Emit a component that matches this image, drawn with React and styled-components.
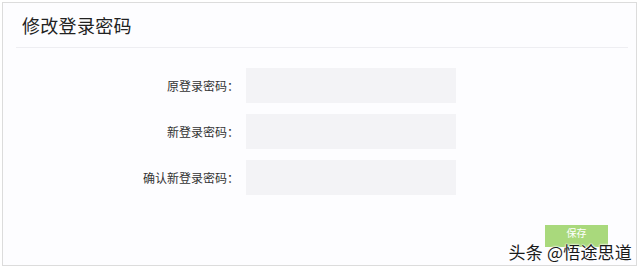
import React from "react";
import styled, { createGlobalStyle } from "styled-components";

const GlobalStyle = createGlobalStyle`
  html, body {
    margin: 0;
    padding: 0;
    background: #ffffff;
    font-family: "Noto Sans CJK SC", "Liberation Sans", sans-serif;
  }
`;

const fields = [
  { id: "old", label: "原登录密码：" },
  { id: "new", label: "新登录密码：" },
  { id: "confirm", label: "确认新登录密码：" },
];

export default function App() {
  return (
    <>
      <GlobalStyle />
      <Page>
        <Panel>
          <Header>
            <Title>修改登录密码</Title>
          </Header>
          <Form>
            {fields.map((f) => (
              <Row key={f.id}>
                <Label htmlFor={f.id}>{f.label}</Label>
                <Input id={f.id} type="password" />
              </Row>
            ))}
          </Form>
          <Footer>
            <SaveButton>保存</SaveButton>
          </Footer>
          <Watermark>头条 @悟途思道</Watermark>
        </Panel>
      </Page>
    </>
  );
}

const Page = styled.div`
  width: 640px;
  height: 269px;
  padding: 2px 3px 3px 2px;
  box-sizing: border-box;
  background: #ffffff;
`;

const Panel = styled.div`
  position: relative;
  height: 100%;
  box-sizing: border-box;
  border: 1px solid #dcdcdc;
  background: #fdfdff;
  display: flex;
  flex-direction: column;
`;

const Header = styled.div`
  margin: 0 8px 0 13px;
  height: 44px;
  border-bottom: 1px solid #eeeef2;
  display: flex;
  align-items: center;
  padding-left: 6px;
`;

const Title = styled.h1`
  margin: 0;
  font-size: 18px;
  font-weight: 400;
  color: #222;
  letter-spacing: 0.3px;
`;

const Form = styled.div`
  display: flex;
  flex-direction: column;
  gap: 11px;
  padding-top: 20px;
`;

const Row = styled.div`
  display: grid;
  grid-template-columns: 236px 210px;
  column-gap: 7px;
  align-items: center;
`;

const Label = styled.label`
  text-align: right;
  font-size: 12px;
  color: #333;
`;

const Input = styled.input`
  height: 35px;
  box-sizing: border-box;
  border: none;
  background: #f3f3f6;
  outline: none;
  padding: 0 8px;
`;

const Footer = styled.div`
  display: flex;
  justify-content: flex-end;
  padding: 30px 28px 0 0;
`;

const SaveButton = styled.button`
  width: 63px;
  height: 22px;
  border: none;
  background: #a9d97c;
  color: #ffffff;
  font-size: 10px;
  line-height: 1;
  font-family: inherit;
  padding: 0 0 6px;
`;

const Watermark = styled.div`
  position: absolute;
  right: 4px;
  bottom: 5px;
  font-size: 17px;
  line-height: 1;
  color: #1a1a1a;
  text-shadow: 0 0 2px #fff, 0 0 2px #fff, 0 0 2px #fff;
  letter-spacing: 0.2px;
`;
